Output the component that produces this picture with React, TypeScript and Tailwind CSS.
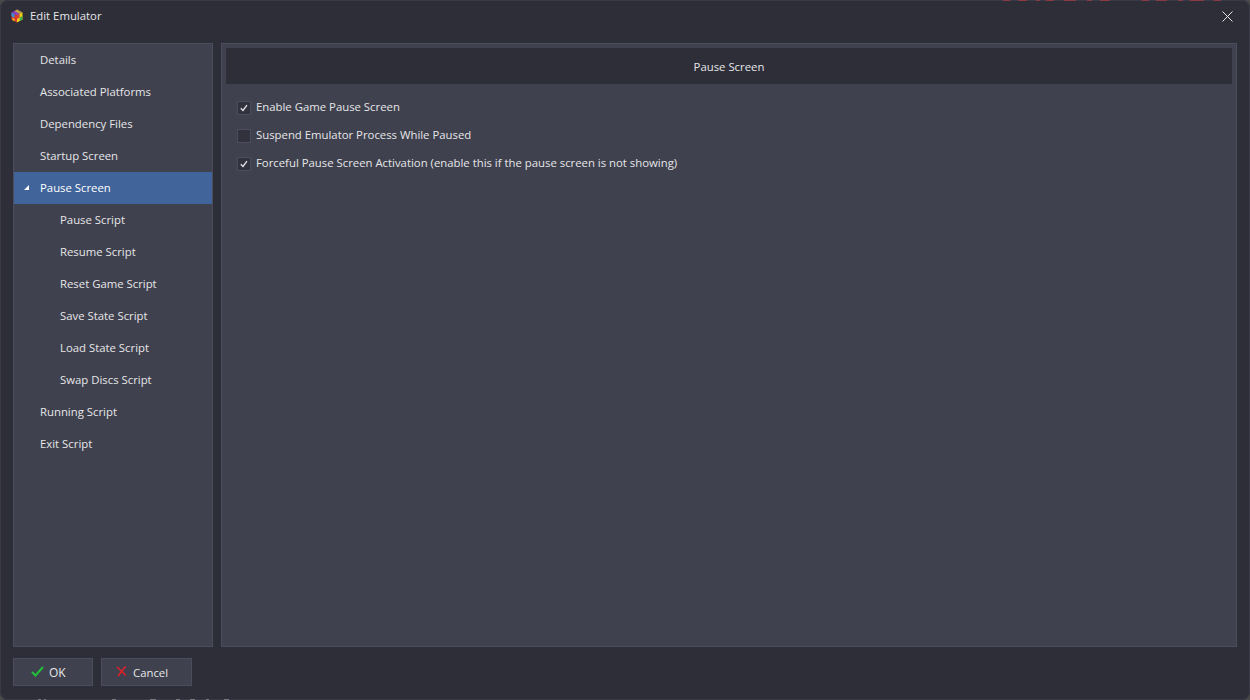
const navItems = [
  { label: "Details" },
  { label: "Associated Platforms" },
  { label: "Dependency Files" },
  { label: "Startup Screen" },
  { label: "Pause Screen", active: true },
  { label: "Pause Script", child: true },
  { label: "Resume Script", child: true },
  { label: "Reset Game Script", child: true },
  { label: "Save State Script", child: true },
  { label: "Load State Script", child: true },
  { label: "Swap Discs Script", child: true },
  { label: "Running Script" },
  { label: "Exit Script" },
];

const options = [
  { label: "Enable Game Pause Screen", checked: true },
  { label: "Suspend Emulator Process While Paused", checked: false },
  { label: "Forceful Pause Screen Activation (enable this if the pause screen is not showing)", checked: true },
];

// what shows of the desktop behind the window, along its top and bottom edges
const topNoise = [
  [1003, 7], [1018, 9], [1036, 4], [1046, 8], [1064, 12], [1087, 5], [1100, 10],
  [1142, 7], [1156, 11], [1178, 5], [1190, 14], [1214, 7],
];
const bottomNoise = [
  [38, 3], [44, 2], [112, 4], [150, 6], [176, 4], [190, 5], [206, 3], [224, 5],
];

function CubeIcon() {
  return (
    <svg width="14" height="14" viewBox="0 0 14 14">
      <path d="M7 0.5 L12.5 3.5 L7 6.5 L1.5 3.5 Z" fill="#8a3fc4" />
      <path d="M7 0.5 L12.5 3.5 L9.5 5 L4.5 2 Z" fill="#c0a03a" />
      <path d="M1.5 3.5 L7 6.5 L7 13.5 L1.5 10.5 Z" fill="#e0392b" />
      <path d="M1.5 3.5 L4.5 5.2 L4.5 9 L1.5 7.3 Z" fill="#2f8fe0" />
      <path d="M7 6.5 L12.5 3.5 L12.5 10.5 L7 13.5 Z" fill="#f0d419" />
      <path d="M7 6.5 L9.7 5 L9.7 8.5 L7 10 Z" fill="#d9442e" />
      <path d="M9.7 8.5 L12.5 7 L12.5 10.5 L9.7 12 Z" fill="#3fae49" />
      <path d="M2.5 9 L4.5 10 L4.5 12.2 L2.5 11.2 Z" fill="#e8c020" />
    </svg>
  );
}

function CheckBox({ checked }: { checked: boolean }) {
  return (
    <span className="flex h-[14px] w-[14px] shrink-0 items-center justify-center border border-[#4b4d5e] bg-[#31323d]">
      {checked && (
        <svg width="10" height="10" viewBox="0 0 10 10" fill="none">
          <path d="M1.8 5.2 L4 7.4 L8 2.2" stroke="#e8e8ea" strokeWidth="1.3" />
        </svg>
      )}
    </span>
  );
}

export default function App() {
  return (
    <div className="relative h-[700px] w-[1250px] overflow-hidden bg-[#4a4a4a] font-['Open_Sans',sans-serif] text-[11.35px] leading-[16px] text-[#e6e6e8]">
      <div className="flex h-full w-full flex-col rounded-[8px] bg-[#2d2e38] shadow-[inset_0_0_0_1px_#393a45]">
        <div className="flex h-[32px] shrink-0 items-center justify-between pl-[10px] pr-[17px]">
          <div className="flex items-center gap-[6px]">
            <CubeIcon />
            <span>Edit Emulator</span>
          </div>
          <svg width="11" height="11" viewBox="0 0 11 11" fill="none">
            <path d="M0.5 0.5 L10.5 10.5 M10.5 0.5 L0.5 10.5" stroke="#e6e6e8" />
          </svg>
        </div>

        <div className="flex min-h-0 flex-1 gap-[8px] px-[13px] pt-[11px]">
          <div className="w-[200px] shrink-0 border border-[#4b4d5e] bg-[#3f414e]">
            {navItems.map((item) => (
              <div
                key={item.label}
                className={`flex h-[32px] items-center ${item.child ? "pl-[46px]" : "pl-[26px]"} ${item.active ? "relative bg-[#41659a] text-white" : ""}`}
              >
                {item.active && (
                  <span className="absolute left-[10px] top-[13px] h-0 w-0 border-b-[5px] border-l-[5px] border-b-white border-l-transparent" />
                )}
                {item.label}
              </div>
            ))}
          </div>

          <div className="flex min-w-0 flex-1 flex-col border border-[#4b4d5e] bg-[#3f414e] p-[4px]">
            <div className="flex h-[36px] shrink-0 items-center justify-center bg-[#2d2e38] pt-[2px]">Pause Screen</div>
            <div className="flex flex-col gap-[14px] pl-[11px] pt-[17px]">
              {options.map((opt) => (
                <div key={opt.label} className="flex h-[14px] items-center gap-[5px]">
                  <CheckBox checked={opt.checked} />
                  <span className="-mt-[2px]">{opt.label}</span>
                </div>
              ))}
            </div>
          </div>
        </div>

        <div className="flex h-[53px] shrink-0 items-start gap-[8px] px-[13px] pt-[11px]">
          <button type="button" className="flex h-[28px] w-[80px] items-center gap-[5px] border border-[#4b4d5e] bg-[#3f414e] pl-[17px] pt-[2px] text-[12px]">
            <svg width="13" height="12" viewBox="0 0 13 12" fill="none" className="-mt-[2px]">
              <path d="M1 6 L4.5 9.5 L12 1" stroke="#22c03c" strokeWidth="2" />
            </svg>
            OK
          </button>
          <button type="button" className="flex h-[28px] w-[91px] items-center gap-[6px] border border-[#4b4d5e] bg-[#3f414e] pl-[14px] pt-[2px]">
            <svg width="11" height="11" viewBox="0 0 11 11" fill="none" className="-mt-[3px]">
              <path d="M1 1 L10 9.5 M9.5 0.5 L2 10" stroke="#e0202a" strokeWidth="1.6" />
            </svg>
            Cancel
          </button>
        </div>
      </div>

      <svg className="absolute left-0 top-0" width="1250" height="1" viewBox="0 0 1250 1">
        {topNoise.map(([x, w]) => (
          <rect key={x} x={x} y="0" width={w} height="1" fill="#8a3a42" />
        ))}
      </svg>
      <svg className="absolute bottom-0 left-0" width="1250" height="1" viewBox="0 0 1250 1">
        {bottomNoise.map(([x, w]) => (
          <rect key={x} x={x} y="0" width={w} height="1" fill="#77787f" />
        ))}
      </svg>
    </div>
  );
}
